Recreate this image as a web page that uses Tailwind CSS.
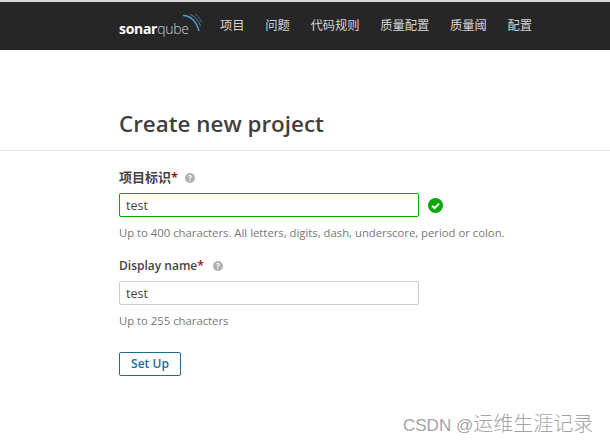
<!DOCTYPE html>
<html lang="en">
<head>
    <meta charset="UTF-8">
    <title>Create new project</title>
    <script src="https://cdn.jsdelivr.net/npm/@tailwindcss/browser@4"></script>
</head>
<body class="relative w-[610px] h-[443px] overflow-hidden bg-white text-[#444] font-['Open_Sans','Noto_Sans_CJK_SC',sans-serif]">
    <nav class="h-[50px] border-t-2 border-[#d8d8d8] bg-[#262626] pl-[119px] flex items-center text-[12.3px] text-[#d4d4d4]">
        <div class="relative w-[84px] h-[30px] mr-[17px] flex items-center">
            <span class="text-[14px] leading-none text-white font-bold tracking-[-0.3px] mt-[6px]">sonar<span class="font-light text-[#cfcfcf]">qube</span></span>
            <svg class="absolute left-[64px] top-[3px]" width="20" height="20" viewBox="0 0 20 20" fill="none" stroke="#4b9fd5">
                <path d="M0 1.5C7 1.5 13.500 7 16 17" stroke-width="1.5"/>
                <path d="M7 0.5C11.500 2 15.500 6 17.500 12" stroke-width="0.8"/>
                <path d="M12 0C14.500 1.500 17 4 18.500 8" stroke-width="0.6"/>
            </svg>
        </div>
        <div class="flex gap-[20.6px]">
            <a>项目</a>
            <a>问题</a>
            <a>代码规则</a>
            <a>质量配置</a>
            <a>质量阈</a>
            <a>配置</a>
        </div>
    </nav>

    <main class="pt-[56px]">
        <h1 class="pl-[119px] h-[45px] border-b border-[#e6e6e6] text-[22.4px] leading-[36px] font-semibold text-[#3f3f3f]">Create new project</h1>

        <form class="pl-[119px] pt-[18px]">
            <div class="flex items-center h-[18px] text-[12px] font-semibold">
                <label class="text-[13px]">项目标识<span class="text-[#a00000]">*</span></label>
                <svg class="ml-[7px]" width="10" height="10" viewBox="0 0 10 10"><circle cx="5" cy="5" r="5" fill="#b0b0b0"/><text x="5" y="8" text-anchor="middle" font-size="8" font-weight="700" fill="#fff">?</text></svg>
            </div>
            <div class="flex items-center mt-[6px]">
                <div class="w-[300px] h-[24px] border border-[#0a0] rounded-[2px] pl-[6px] text-[12.5px] leading-[24px]">test</div>
                <svg class="ml-[9px]" width="15" height="15" viewBox="0 0 15 15"><circle cx="7.5" cy="7.5" r="7.5" fill="#0a0"/><path d="M4 7.7l2.5 2.5 4.6-4.6" fill="none" stroke="#fff" stroke-width="2"/></svg>
            </div>
            <p class="mt-[7px] text-[11.3px] leading-[18px] text-[#777]">Up to 400 characters. All letters, digits, dash, underscore, period or colon.</p>

            <div class="flex items-center h-[18px] mt-[15px] text-[12px] font-semibold">
                <label>Display name<span class="text-[#a00000]">*</span></label>
                <svg class="ml-[9px]" width="10" height="10" viewBox="0 0 10 10"><circle cx="5" cy="5" r="5" fill="#b0b0b0"/><text x="5" y="8" text-anchor="middle" font-size="8" font-weight="700" fill="#fff">?</text></svg>
            </div>
            <div class="mt-[6px] w-[300px] h-[24px] border border-[#cdcdcd] rounded-[2px] pl-[6px] text-[12.5px] leading-[24px]">test</div>
            <p class="mt-[7px] text-[11.3px] leading-[18px] text-[#777]">Up to 255 characters</p>

            <button type="button" class="block mt-[22px] w-[62px] h-[24px] border border-[#236a97] rounded-[2px] text-[12px] font-semibold text-[#236a97]">Set Up</button>
        </form>
    </main>

    <div class="absolute left-[403px] top-[411px] text-[17px] leading-[26px] text-[#a3a3a3] font-['Liberation_Sans','Noto_Sans_CJK_SC',sans-serif]">CSDN @<span class="text-[20px] font-light">运维生涯记录</span></div>
</body>
</html>
